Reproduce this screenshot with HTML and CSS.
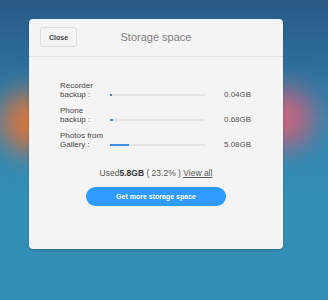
FILE: index.html
```html
<!DOCTYPE html>
<html>
<head>
<meta charset="utf-8">
<link rel="stylesheet" href="styles.css">
</head>
<body>
<div class="bg">
  <div class="glow glow-left"></div>
  <div class="glow glow-right"></div>
  <div class="modal">
    <div class="header">
      <button class="close">Close</button>
      <div class="title">Storage space</div>
    </div>
    <div class="content">
      <div class="row">
        <div class="label">Recorder<br>backup :</div>
        <div class="bar"><div class="fill" style="width:2px"></div></div>
        <div class="value">0.04GB</div>
      </div>
      <div class="row">
        <div class="label">Phone<br>backup :</div>
        <div class="bar"><div class="fill" style="width:3px"></div></div>
        <div class="value">0.68GB</div>
      </div>
      <div class="row">
        <div class="label">Photos from<br>Gallery :</div>
        <div class="bar"><div class="fill" style="width:19px"></div></div>
        <div class="value">5.08GB</div>
      </div>
      <div class="used">Used<b>5.8GB</b> ( 23.2% ) <a class="viewall">View all</a></div>
      <button class="more">Get more storage space</button>
    </div>
  </div>
</div>
</body>
</html>
```
FILE: styles.css
```css
* { box-sizing: border-box; }
html, body { margin: 0; padding: 0; }
body {
  width: 328px;
  height: 300px;
  overflow: hidden;
  font-family: "Liberation Sans", Arial, sans-serif;
}
.bg {
  position: relative;
  width: 328px;
  height: 300px;
  background: linear-gradient(180deg, #285a86 0px, #2c6d98 60px, #3188b2 120px, #338eb5 200px, #338eb5 300px);
  padding-top: 19px;
  padding-left: 29px;
}
.glow {
  position: absolute;
  width: 76px;
  height: 76px;
  border-radius: 50%;
  filter: blur(12px);
}
.glow-left {
  left: -8px;
  top: 84px;
  background: radial-gradient(circle, #ea7a32 0%, #cf7444 35%, rgba(180,110,90,0.5) 60%, rgba(160,110,110,0) 80%);
}
.glow-right {
  left: 246px;
  top: 80px;
  background: radial-gradient(circle, #d4667e 0%, #c0647e 35%, rgba(150,100,130,0.5) 60%, rgba(130,100,140,0) 80%);
}
.modal {
  position: relative;
  width: 254px;
  height: 230px;
  background: #f4f4f4;
  border-radius: 4px;
  box-shadow: 0 1px 2px rgba(0,0,0,0.25);
}
.header {
  height: 38px;
  border-bottom: 1px solid #e2e2e2;
  display: flex;
  align-items: center;
  padding-left: 11px;
}
.close {
  width: 37px;
  height: 20px;
  border: 1px solid #dcdcdc;
  background: #f4f4f4;
  border-radius: 3px;
  font-family: inherit;
  font-size: 7px;
  font-weight: 700;
  color: #444;
  padding: 0;
  margin-top: -1px;
}
.title {
  position: absolute;
  left: 0;
  right: 0;
  top: 12px;
  text-align: center;
  font-size: 11px;
  line-height: 13px;
  color: #808080;
  pointer-events: none;
}
.content {
  padding: 24px 0 0 31px;
}
.row {
  display: flex;
  align-items: flex-end;
  height: 18px;
  margin-bottom: 7px;
}
.label {
  width: 50px;
  font-size: 8px;
  line-height: 9px;
  color: #444;
}
.bar {
  width: 95px;
  height: 2px;
  background: #e4e4e4;
  margin-bottom: 3px;
  position: relative;
}
.fill {
  height: 2px;
  background: #3f8fe0;
}
.value {
  margin-left: 19px;
  font-size: 8px;
  line-height: 9px;
  color: #555;
}
.used {
  margin-top: 19px;
  margin-left: -31px;
  text-align: center;
  font-size: 8.5px;
  color: #555;
  line-height: 10px;
}
.used b { color: #333; }
.viewall { text-decoration: underline; color: #555; }
.more {
  display: block;
  margin: 9px 0 0 26px;
  width: 140px;
  height: 19px;
  border: none;
  border-radius: 10px;
  background: #2d9bff;
  color: #fff;
  font-family: inherit;
  font-size: 7px;
  font-weight: 700;
  padding: 0;
}
```
